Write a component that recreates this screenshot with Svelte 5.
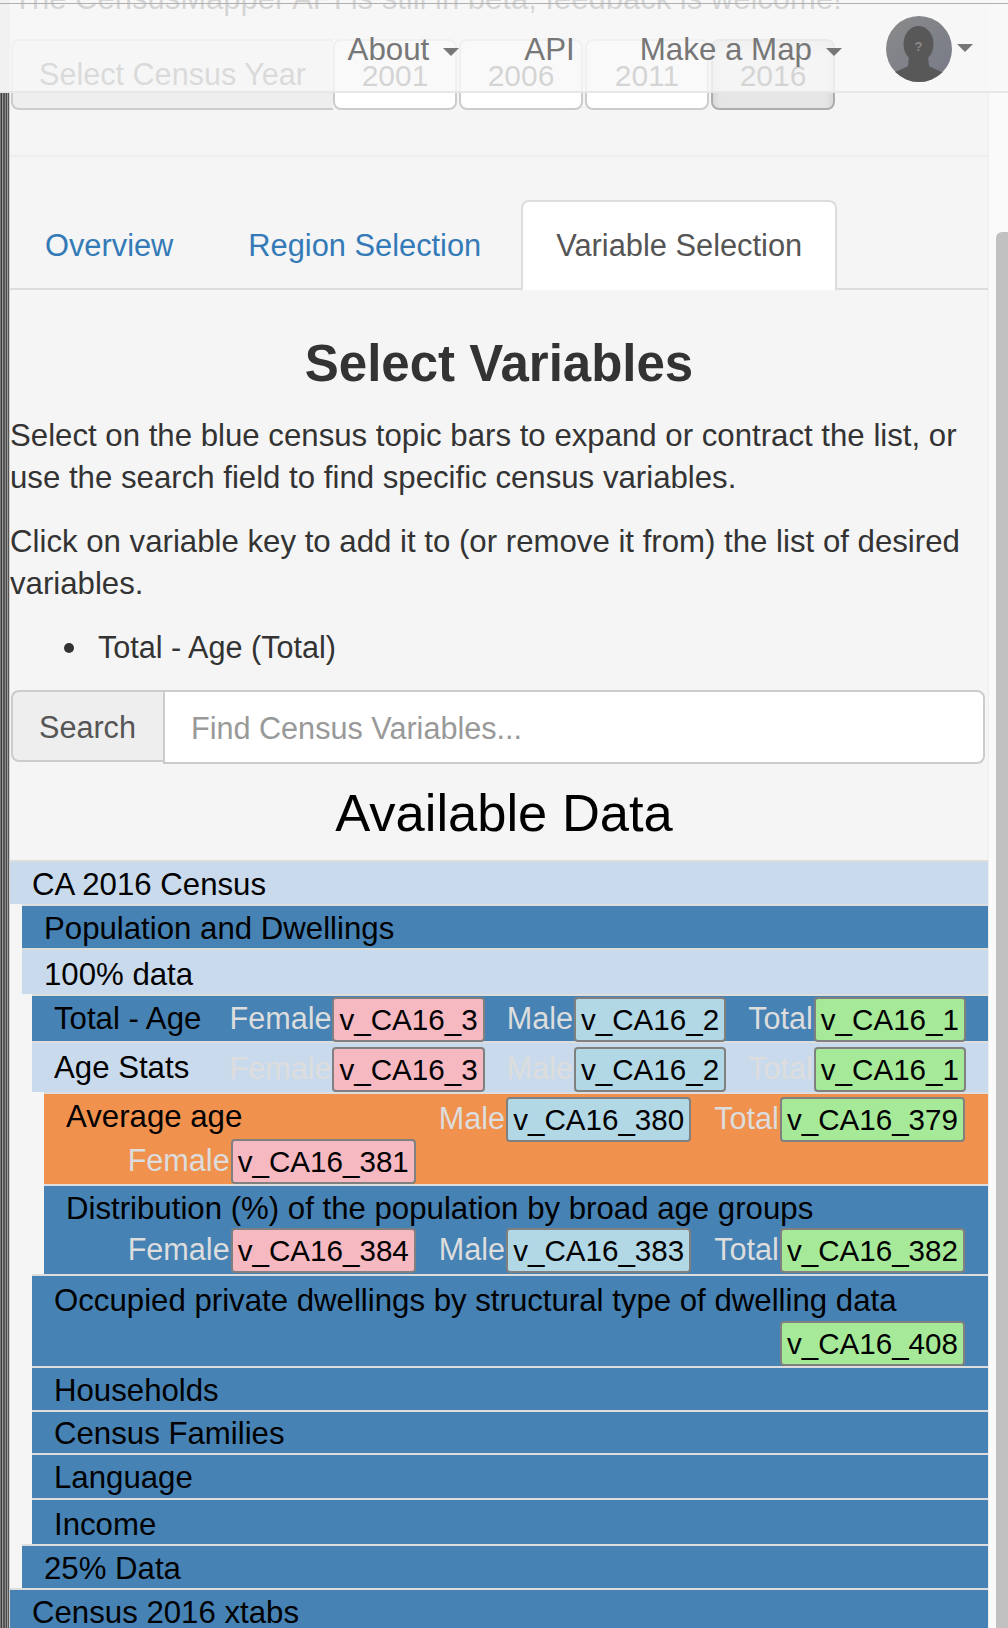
<script>
    const years = ['2001', '2006', '2011', '2016'];
    const simpleRows = [
        { title: 'Households' },
        { title: 'Census Families', cls: 'short' },
        { title: 'Language', cls: 'mid' },
        { title: 'Income', cls: 'push' },
    ];
</script>

{#snippet group(label, code, kind)}
    <div class="group {kind}">
        <span class="label">{label}</span>
        <span class="chip {kind}">{code}</span>
    </div>
{/snippet}

<div class="page">
    <div class="edge"></div>

    <main>
        <p class="notice">The CensusMapper API is still in beta, feedback is welcome!</p>

        <div class="year-group">
            <span class="addon">Select Census Year</span>
            {#each years as year}
                <button class="year" class:active={year === '2016'}>{year}</button>
            {/each}
        </div>

        <hr />

        <ul class="tabs">
            <li><a href="#overview">Overview</a></li>
            <li><a href="#region">Region Selection</a></li>
            <li class="current"><a href="#variables">Variable Selection</a></li>
        </ul>

        <h2>Select Variables</h2>
        <p>Select on the blue census topic bars to expand or contract the list, or use the search field to find specific census variables.</p>
        <p>Click on variable key to add it to (or remove it from) the list of desired variables.</p>
        <ul class="picked">
            <li>Total - Age (Total)</li>
        </ul>

        <div class="search">
            <span class="search-addon">Search</span>
            <input type="text" placeholder="Find Census Variables..." />
        </div>

        <h1>Available Data</h1>

        <div class="tree">
            <div class="row light">CA 2016 Census</div>
            <div class="sub first">
                <div class="row blue">Population and Dwellings</div>
                <div class="row light push">100% data</div>
                <div class="sub second">
                    <div class="row blue vars">
                        <span class="title">Total - Age</span>
                        {@render group('Female', 'v_CA16_3', 'female')}
                        {@render group('Male', 'v_CA16_2', 'male')}
                        {@render group('Total', 'v_CA16_1', 'total')}
                    </div>
                    <div class="row light vars stats">
                        <span class="title">Age Stats</span>
                        {@render group('Female', 'v_CA16_3', 'female')}
                        {@render group('Male', 'v_CA16_2', 'male')}
                        {@render group('Total', 'v_CA16_1', 'total')}
                    </div>
                    <div class="sub first">
                        <div class="row orange wrap average">
                            <span class="title">Average age</span>
                            {@render group('Male', 'v_CA16_380', 'male')}
                            {@render group('Total', 'v_CA16_379', 'total')}
                            {@render group('Female', 'v_CA16_381', 'female')}
                        </div>
                        <div class="row blue wrap spread">
                            <span class="title">Distribution (%) of the population by broad age groups</span>
                            {@render group('Female', 'v_CA16_384', 'female')}
                            {@render group('Male', 'v_CA16_383', 'male')}
                            {@render group('Total', 'v_CA16_382', 'total')}
                        </div>
                    </div>
                    <div class="row blue occupied">
                        <span class="title">Occupied private dwellings by structural type of dwelling data</span>
                        <span class="chip total">v_CA16_408</span>
                    </div>
                    {#each simpleRows as row}
                        <div class="row blue {row.cls ?? ''}">{row.title}</div>
                    {/each}
                </div>
                <div class="row blue">25% Data</div>
            </div>
            <div class="row blue">Census 2016 xtabs</div>
        </div>
    </main>

    <div class="gutter"><div class="thumb"></div></div>

    <nav class="navbar">
        <span class="nav-item">About <i class="caret"></i></span>
        <span class="nav-item">API</span>
        <span class="nav-item">Make a Map <i class="caret"></i></span>
        <span class="user">
            <svg width="66" height="66" viewBox="0 0 66 66">
                <defs>
                    <linearGradient id="face" x1="0" y1="0" x2="1" y2="1">
                        <stop offset="0" stop-color="#8a8a8a" />
                        <stop offset="1" stop-color="#777a88" />
                    </linearGradient>
                    <clipPath id="disc"><circle cx="33" cy="33" r="33" /></clipPath>
                </defs>
                <circle cx="33" cy="33" r="33" fill="url(#face)" />
                <g clip-path="url(#disc)" fill="#585858">
                    <ellipse cx="32.5" cy="28" rx="15" ry="18" />
                    <path d="M23 40h19l1 10c4 3 13 5 18 9v7H4v-7c5-4 14-6 18-9z" />
                </g>
                <text x="32.5" y="35" class="mark">?</text>
            </svg>
            <i class="caret up"></i>
        </span>
    </nav>
</div>

<style>
    :global(body) {
        margin: 0;
        background: #f5f5f5;
    }

    .page {
        position: relative;
        display: grid;
        grid-template-columns: 10px 978px 20px;
        height: 1628px;
        overflow: hidden;
        font-family: "Liberation Sans", Arial, sans-serif;
        font-size: 31px;
        line-height: 41.4px;
        color: #333;
    }

    .edge {
        background: linear-gradient(90deg, #777 0 1px, #3a3a3a 1px 2px, #999 2px 3px, #555 3px 5px, #888 5px 6px, #444 6px 7px, #9a9a9a 7px 8px, #555 8px 9px, #ccc 9px 10px);
    }
    .edge::before {
        content: '';
        display: block;
        height: 93px;
        background: #d4d4d4;
    }

    main {
        min-width: 0;
        margin-top: -22px;
    }

    p {
        margin: 0 0 23px;
        font-size: 31.2px;
    }

    .notice {
        margin: 0;
        font-size: 31px;
        white-space: nowrap;
        padding-left: 3px;
    }

    .year-group {
        display: flex;
        margin: 20px 0 0 1px;
        height: 71px;
    }
    .addon {
        width: 322px;
        box-sizing: border-box;
        padding: 13px 0 0 26px;
        font-size: 30.6px;
        color: #555;
        background: #eee;
        border: 2px solid #ccc;
        border-right: 0;
        border-radius: 8px 0 0 8px;
    }
    .year {
        width: 124px;
        margin-right: 2px;
        padding: 2px 0 0;
        font: inherit;
        font-size: 30px;
        color: #333;
        background: #fff;
        border: 2px solid #ccc;
        border-radius: 8px;
    }
    .year.active {
        background: #e6e6e6;
        border-color: #adadad;
        box-shadow: inset 0 6px 10px rgba(0, 0, 0, 0.125);
    }

    hr {
        margin: 45px 0 43px;
        border: 0;
        height: 2px;
        background: #eee;
    }

    .tabs {
        display: flex;
        gap: 5px;
        margin: 0;
        padding: 0;
        list-style: none;
        height: 90px;
        box-sizing: border-box;
        border-bottom: 2px solid #ddd;
        font-size: 30.8px;
    }
    .tabs li {
        height: 90px;
        box-sizing: border-box;
        padding: 23px 33px 0;
        border: 2px solid transparent;
        border-bottom: 0;
    }
    .tabs a {
        color: #337ab7;
        text-decoration: none;
    }
    .tabs .current {
        background: #fff;
        border-color: #ddd;
        border-radius: 8px 8px 0 0;
    }
    .tabs .current a {
        color: #555;
    }

    h2 {
        margin: 46px 0 24px;
        font-size: 51px;
        line-height: 55px;
        font-weight: 700;
        text-align: center;
    }

    .picked {
        margin: 1px 0 22px;
        padding-left: 88px;
        list-style: none;
        font-size: 30.6px;
    }
    .picked li::before {
        content: '';
        display: inline-block;
        width: 10px;
        height: 10px;
        margin: 0 24px 0 -34px;
        vertical-align: 5px;
        border-radius: 50%;
        background: #333;
    }

    .search {
        display: flex;
        margin: 0 3px 0 1px;
        height: 74px;
        font-size: 30.6px;
    }
    .search-addon {
        width: 152px;
        height: 72px;
        box-sizing: border-box;
        padding: 15px 0 0 26px;
        color: #555;
        background: #eee;
        border: 2px solid #ccc;
        border-right: 0;
        border-radius: 8px 0 0 8px;
    }
    .search input {
        flex: 1;
        min-width: 0;
        box-sizing: border-box;
        padding: 2px 26px 0;
        font: inherit;
        background: #fff;
        border: 2px solid #ccc;
        border-radius: 0 8px 8px 0;
        outline: 0;
    }
    .search input::placeholder {
        color: #999;
        opacity: 1;
    }

    h1 {
        margin: 20px 0 19px;
        font-size: 52.5px;
        line-height: 57px;
        font-weight: 400;
        color: #000;
        text-align: center;
        padding-left: 10px;
    }

    .tree {
        color: #000;
        font-size: 31.2px;
    }
    .sub.first {
        margin-left: 12px;
    }
    .sub.second {
        margin-left: 10px;
    }

    .row {
        border-top: 2px solid #ddd;
        padding: 3px 0 0 22px;
        line-height: 39px;
    }
    .light {
        background: #c9daec;
    }
    .blue {
        background: #4682b4;
    }
    .orange {
        background: #f0914e;
    }
    .push {
        padding-top: 5px;
    }
    .short {
        line-height: 38px;
    }
    .mid {
        padding-bottom: 1px;
    }

    .vars {
        display: flex;
        gap: 22px;
        padding: 0 22px 0 22px;
        height: 45px;
    }
    .vars.stats {
        height: 49px;
    }
    .vars .title {
        margin-right: auto;
        padding-top: 3px;
        white-space: nowrap;
    }
    .vars .group {
        margin-top: 1px;
    }
    .vars.stats .title {
        padding-top: 5px;
    }
    .vars.stats .group {
        margin-top: 4px;
    }

    .group {
        display: flex;
        gap: 1px;
    }
    .group .label {
        font-size: 30.6px;
        line-height: 42px;
        color: #ddd;
    }

    .chip {
        box-sizing: border-box;
        height: 45px;
        padding: 0 5px;
        font-size: 29.6px;
        line-height: 41px;
        color: #000;
        border: 2px solid #808080;
        border-radius: 4px;
    }
    .chip.female {
        background: #f6b8c1;
    }
    .chip.male {
        background: #b2d7e5;
    }
    .chip.total {
        background: #a6ea99;
    }

    .wrap {
        display: grid;
        grid-template-columns: 1fr auto auto;
        column-gap: 23px;
        padding: 0 23px 0 22px;
    }
    .wrap .title {
        padding-top: 3px;
    }
    .wrap .group {
        justify-self: end;
    }
    .average {
        grid-template-rows: 45px 45px;
    }
    .average .title {
        grid-column: 1;
    }
    .average .group {
        align-self: start;
    }
    .average .group.male,
    .average .group.total {
        margin-top: 3px;
    }
    .average .group.female {
        grid-column: 1;
        grid-row: 2;
    }
    .spread {
        grid-template-rows: 42px 46px;
    }
    .spread .title {
        grid-column: 1 / -1;
    }

    .occupied {
        display: grid;
        grid-template-rows: 45px 45px;
        padding: 0 23px 0 22px;
    }
    .occupied .title {
        padding-top: 5px;
    }
    .occupied .chip {
        justify-self: end;
    }

    .gutter {
        position: relative;
        background: #fafafa;
        border-left: 1px solid #eee;
    }
    .thumb {
        position: absolute;
        top: 232px;
        left: 7px;
        right: 0;
        bottom: 0;
        background: #c1c1c1;
        border-radius: 6px 0 0 0;
    }

    .navbar {
        position: absolute;
        top: 0;
        left: 0;
        right: 0;
        height: 93px;
        box-sizing: border-box;
        display: flex;
        justify-content: flex-end;
        gap: 65px;
        padding: 29px 35px 0 0;
        font-size: 31.3px;
        line-height: 42px;
        color: #777;
        background: linear-gradient(#b0b0b0, #b0b0b0) 0 3px / 100% 1px no-repeat, rgba(248, 248, 248, 0.82);
        border-bottom: 2px solid #e7e7e7;
    }
    .nav-item {
        display: flex;
        align-items: center;
        gap: 14px;
        height: 42px;
    }
    .caret {
        width: 0;
        height: 0;
        margin-top: 3px;
        border-top: 8px solid #777;
        border-left: 8.5px solid transparent;
        border-right: 8.5px solid transparent;
    }
    .caret.up {
        margin-top: -2px;
    }
    .user {
        display: flex;
        align-items: center;
        gap: 5px;
        height: 66px;
        margin: -13px 0 0 -21px;
    }
    .mark {
        font-size: 13px;
        font-weight: 700;
        fill: #8a8a8a;
        text-anchor: middle;
    }
</style>
